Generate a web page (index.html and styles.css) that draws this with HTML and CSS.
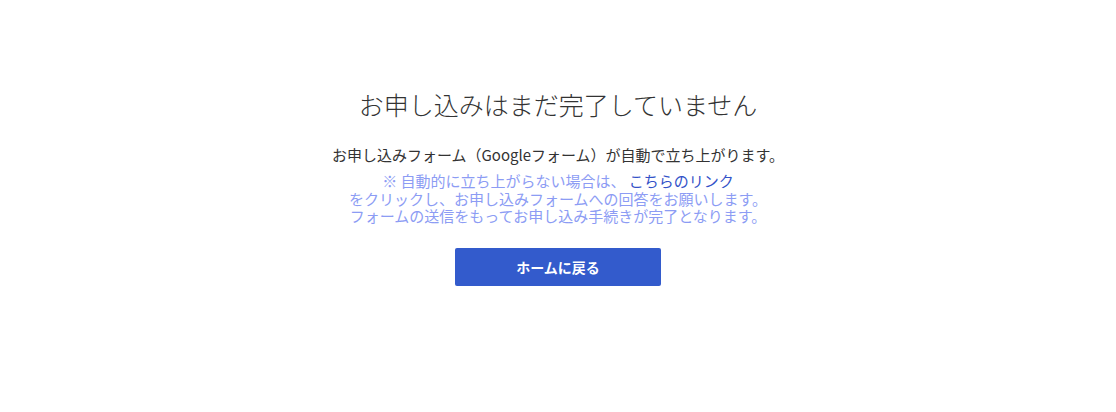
FILE: index.html
```html
<!DOCTYPE html>
<html lang="ja">
<head>
<meta charset="utf-8">
<title>お申し込みはまだ完了していません</title>
<link rel="stylesheet" href="styles.css">
</head>
<body>
<main class="page">
  <h1 class="title">お申し込みはまだ完了していません</h1>
  <p class="lead">お申し込みフォーム（Googleフォーム）が自動で立ち上がります。</p>
  <p class="note">※ 自動的に立ち上がらない場合は、 <a class="link" href="#">こちらのリンク</a><br>をクリックし、お申し込みフォームへの回答をお願いします。<br>フォームの送信をもってお申し込み手続きが完了となります。</p>
  <a class="btn" href="#">ホームに戻る</a>
</main>
</body>
</html>
```
FILE: styles.css
```css
html, body {
  margin: 0;
  padding: 0;
  background: #ffffff;
}
body {
  font-family: "Noto Sans CJK JP", "Noto Sans", sans-serif;
  color: #333333;
}
.page {
  display: flex;
  flex-direction: column;
  align-items: center;
  padding-top: 86px;
  text-align: center;
}
.title {
  margin: 0;
  font-size: 25px;
  font-weight: 300;
  line-height: 36px;
  color: #333333;
}
.lead {
  margin: 22px 0 0;
  font-size: 15px;
  line-height: 22px;
  color: #333333;
}
.note {
  margin: 6px 0 0;
  font-size: 15px;
  line-height: 17.5px;
  color: #8c9cf4;
}
.link {
  color: #3352c8;
  text-decoration: none;
}
.btn {
  margin-top: 23px;
  display: flex;
  align-items: center;
  justify-content: center;
  width: 206px;
  height: 38px;
  background: #335bcc;
  border-radius: 2px;
  color: #ffffff;
  font-size: 14px;
  font-weight: 700;
  text-decoration: none;
}
```
